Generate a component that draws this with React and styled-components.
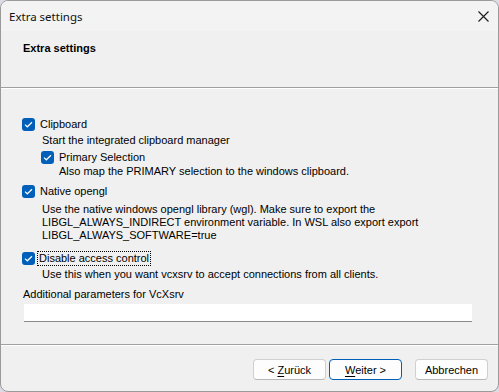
import styled, { createGlobalStyle } from "styled-components";

const GlobalStyle = createGlobalStyle`
  html, body {
    margin: 0;
    padding: 0;
    background: #dcdce4;
  }
`;

function App() {
  return (
    <>
      <GlobalStyle />
      <Window>
        <TitleBar>
          <TitleText>Extra settings</TitleText>
          <CloseButton aria-label="Close">
            <svg width="11" height="11" viewBox="0 0 11 11">
              <path d="M0.5 0.5 L10.5 10.5 M10.5 0.5 L0.5 10.5" stroke="#1a1a1a" strokeWidth="1.1" fill="none" />
            </svg>
          </CloseButton>
        </TitleBar>
        <Header>
          <HeaderTitle>Extra settings</HeaderTitle>
        </Header>
        <Content>
          <CheckRow $top={29}>
            <CheckBox />
            <Label>Clipboard</Label>
          </CheckRow>
          <Description $indent={20} $top={2}>
            Start the integrated clipboard manager
          </Description>
          <CheckRow $indent={19} $top={3}>
            <CheckBox />
            <Label>Primary Selection</Label>
          </CheckRow>
          <Description $indent={37} $top={0}>
            Also map the PRIMARY selection to the windows clipboard.
          </Description>
          <CheckRow $top={6}>
            <CheckBox />
            <Label>Native opengl</Label>
          </CheckRow>
          <Description $indent={20} $top={5} $tight>
            Use the native windows opengl library (wgl). Make sure to export the
            <br />
            LIBGL_ALWAYS_INDIRECT environment variable. In WSL also export export
            <br />
            LIBGL_ALWAYS_SOFTWARE=true
          </Description>
          <CheckRow $top={9}>
            <CheckBox />
            <Label $focused>Disable access control</Label>
          </CheckRow>
          <Description $indent={20} $top={2}>
            Use this when you want vcxsrv to accept connections from all clients.
          </Description>
          <FieldLabel>Additional parameters for VcXsrv</FieldLabel>
          <TextField />
        </Content>
        <Footer>
          <DialogButton>
            <span>
              &lt; <u>Z</u>urück
            </span>
          </DialogButton>
          <DialogButton $primary>
            <span>
              <u>W</u>eiter &gt;
            </span>
          </DialogButton>
          <DialogButton $spaced>Abbrechen</DialogButton>
        </Footer>
      </Window>
    </>
  );
}

function CheckBox() {
  return (
    <Box>
      <svg width="9" height="7" viewBox="0 0 9 7">
        <path d="M1 3.6 L3.3 5.8 L8 1.2" stroke="#ffffff" strokeWidth="1.2" fill="none" />
      </svg>
    </Box>
  );
}

export default App;

const Window = styled.div`
  box-sizing: border-box;
  width: 499px;
  height: 392px;
  display: flex;
  flex-direction: column;
  background: #f0f0f0;
  border: 1px solid #9a9a9a;
  border-radius: 8px;
  overflow: hidden;
  font-family: "Liberation Sans", Arial, sans-serif;
  font-size: 11px;
  color: #000;
`;

const TitleBar = styled.div`
  height: 30px;
  flex: none;
  display: flex;
  align-items: center;
  justify-content: space-between;
  background: #f3f3f3;
  padding-left: 8px;
`;

const TitleText = styled.span`
  font-family: "Noto Sans", "Open Sans", sans-serif;
  font-size: 11.5px;
  color: #111;
`;

const CloseButton = styled.div`
  width: 30px;
  height: 30px;
  display: flex;
  align-items: center;
  justify-content: center;
`;

const Header = styled.div`
  height: 57px;
  flex: none;
  background: #f0f0f0;
  border-bottom: 1px solid #a0a0a0;
  box-shadow: 0 1px 0 #ffffff;
  padding: 10px 0 0 22px;
  box-sizing: border-box;
`;

const HeaderTitle = styled.div`
  font-weight: bold;
  font-size: 11px;
  line-height: 14px;
`;

const Content = styled.div`
  flex: 1;
  padding: 0 26px 0 21px;
  display: flex;
  flex-direction: column;
`;

const CheckRow = styled.div`
  display: flex;
  align-items: center;
  height: 14px;
  margin-top: ${(p) => p.$top || 0}px;
  margin-left: ${(p) => p.$indent || 0}px;
`;

const Box = styled.div`
  width: 13px;
  height: 13px;
  box-sizing: border-box;
  border-radius: 3px;
  background: #005fb8;
  display: flex;
  align-items: center;
  justify-content: center;
  flex: none;
`;

const Label = styled.span`
  margin-left: ${(p) => (p.$focused ? 2 : 3)}px;
  line-height: 13px;
  padding: 0 1px;
  border: 1px dotted ${(p) => (p.$focused ? "#000" : "transparent")};
`;

const Description = styled.div`
  margin-left: ${(p) => p.$indent}px;
  margin-top: ${(p) => p.$top}px;
  line-height: ${(p) => (p.$tight ? 13 : 14)}px;
  white-space: nowrap;
`;

const FieldLabel = styled.div`
  margin-top: 6px;
  margin-left: 1px;
  line-height: 14px;
`;

const TextField = styled.div`
  margin-top: 3px;
  margin-left: 2px;
  height: 18px;
  background: #ffffff;
  border-bottom: 1px solid #8a8a8a;
  box-sizing: border-box;
`;

const Footer = styled.div`
  height: 47px;
  flex: none;
  box-sizing: border-box;
  border-top: 1px solid #a0a0a0;
  box-shadow: inset 0 1px 0 #ffffff;
  display: flex;
  justify-content: flex-end;
  align-items: flex-start;
  padding: 14px 10px 0 0;
  gap: 3px;
`;

const DialogButton = styled.div`
  width: 73px;
  height: 21px;
  box-sizing: border-box;
  display: flex;
  align-items: center;
  justify-content: center;
  background: #fdfdfd;
  border: 1px solid ${(p) => (p.$primary ? "#005fb8" : "#d0d0d0")};
  border-bottom-color: ${(p) => (p.$primary ? "#005fb8" : "#b8b8b8")};
  border-radius: 4px;
  margin-left: ${(p) => (p.$spaced ? 10 : 0)}px;
  font-size: 11px;

  u {
    text-underline-offset: 2px;
  }
`;
